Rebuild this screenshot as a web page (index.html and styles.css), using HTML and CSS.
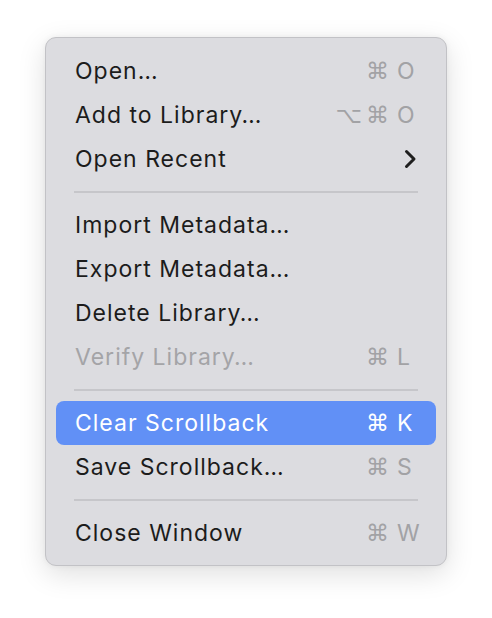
FILE: index.html
```html
<!DOCTYPE html>
<html>
<head>
<meta charset="utf-8">
<link rel="stylesheet" href="styles.css">
</head>
<body>
<div class="menu">
  <div class="item"><span class="label">Open…</span><span class="sc"><span class="mods"><span>⌘</span></span><span class="key">O</span></span></div>
  <div class="item"><span class="label">Add to Library…</span><span class="sc"><span class="mods"><span>⌥</span><span>⌘</span></span><span class="key">O</span></span></div>
  <div class="item"><span class="label">Open Recent</span><svg class="chev" width="14" height="20" viewBox="0 0 14 20"><polyline points="3.5,2.5 11,10 3.5,17.5" fill="none" stroke="#1f1f1f" stroke-width="3" stroke-linecap="round" stroke-linejoin="round"/></svg></div>
  <div class="sep"></div>
  <div class="item"><span class="label">Import Metadata…</span></div>
  <div class="item"><span class="label">Export Metadata…</span></div>
  <div class="item"><span class="label">Delete Library…</span></div>
  <div class="item disabled"><span class="label">Verify Library…</span><span class="sc"><span class="mods"><span>⌘</span></span><span class="key">L</span></span></div>
  <div class="sep"></div>
  <div class="item active"><span class="label">Clear Scrollback</span><span class="sc"><span class="mods"><span>⌘</span></span><span class="key">K</span></span></div>
  <div class="item"><span class="label">Save Scrollback…</span><span class="sc"><span class="mods"><span>⌘</span></span><span class="key">S</span></span></div>
  <div class="sep"></div>
  <div class="item"><span class="label">Close Window</span><span class="sc"><span class="mods"><span>⌘</span></span><span class="key">W</span></span></div>
</div>
</body>
</html>
```
FILE: styles.css
```css
html, body {
  margin: 0;
  padding: 0;
  background: #ffffff;
}
body {
  width: 492px;
  height: 618px;
  font-family: Inter, "Noto Sans", sans-serif;
}
.menu {
  box-sizing: border-box;
  margin-left: 45px;
  margin-top: 37px;
  width: 402px;
  padding: 11px 10px 10px 10px;
  background: #dcdce0;
  border: 1px solid #c2c2c6;
  border-radius: 11px;
  box-shadow: 0 8px 28px rgba(0, 0, 0, 0.13), 0 0 6px rgba(0,0,0,0.05);
}
.item {
  height: 44px;
  display: flex;
  align-items: center;
  justify-content: space-between;
  padding: 0 15px 0 19px;
  border-radius: 8px;
  font-size: 23px;
  font-weight: 400;
  color: #1c1c1c;
  letter-spacing: 1px;
}
.item.disabled { color: #a4a4a7; }
.item.active {
  background: #6190f6;
  color: #ffffff;
}
.sc {
  display: flex;
  align-items: center;
  color: #a2a2a5;
  letter-spacing: 0;
}
.item.active .sc { color: #ffffff; }
.mods {
  display: flex;
  gap: 4px;
  font-family: "DejaVu Sans", sans-serif;
  font-size: 23px;
}
.key {
  width: 24px;
  margin-left: 8px;
  text-align: left;
}
.chev { margin-right: 4px; }
.sep {
  height: 22px;
  display: flex;
  align-items: center;
  padding: 0 18px;
}
.sep::before {
  content: "";
  flex: 1;
  height: 2px;
  background: #c6c6ca;
}
```
